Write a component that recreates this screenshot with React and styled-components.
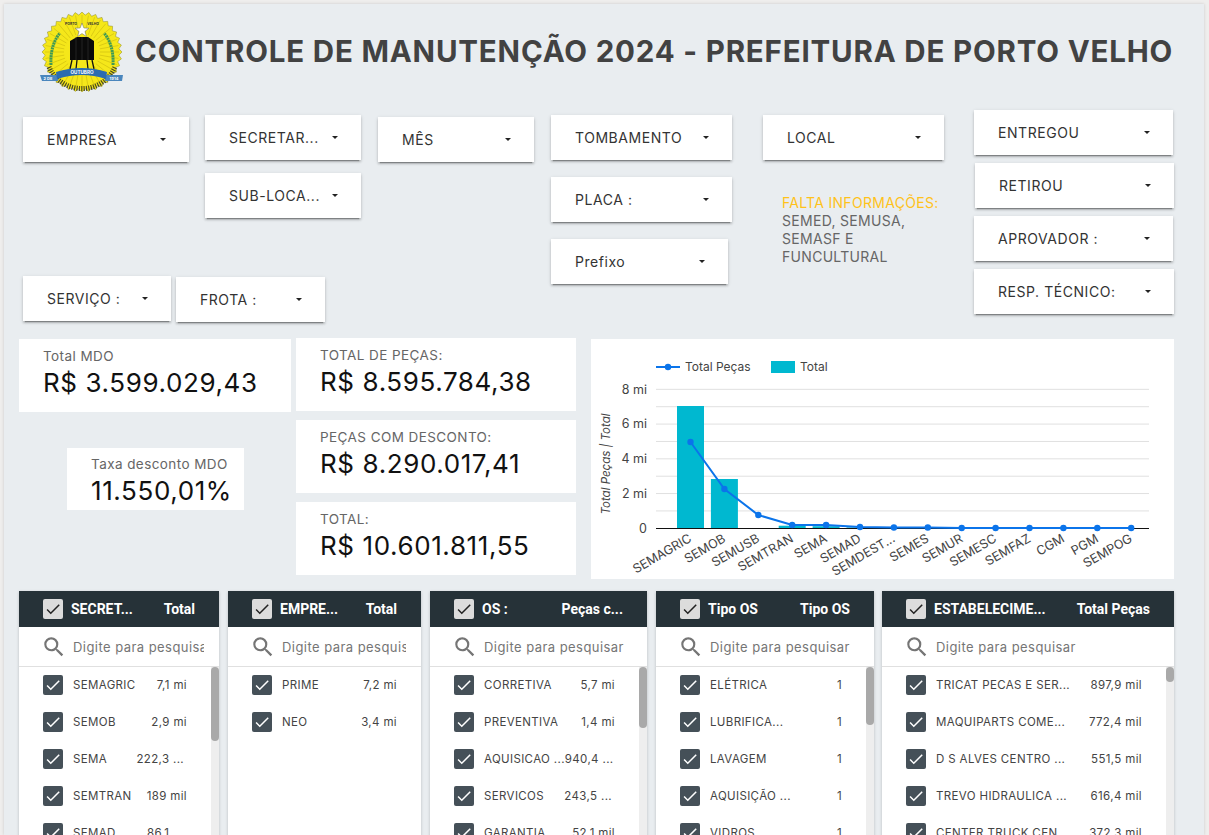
import styled, { createGlobalStyle } from "styled-components";

const GlobalStyle = createGlobalStyle`
  html, body {
    margin: 0;
    height: 100%;
    overflow: hidden;
    background: #efeeed;
    font-family: "Inter", "Liberation Sans", sans-serif;
  }
  * {
    box-sizing: border-box;
  }
`;

const Canvas = styled.div`
  margin: 4px 0 0 4px;
  width: 1200px;
  height: 831px;
  overflow: hidden;
  background: #e9edf0;
  box-shadow: 0 0 3px rgba(0, 0, 0, 0.15);
`;

const Header = styled.header`
  display: flex;
  align-items: center;
  height: 106px;
  padding-left: 36px;
`;

const LogoSvg = styled.svg`
  flex: none;
  align-self: flex-start;
  margin-top: 8px;
`;

const Title = styled.h1`
  margin: 0 0 12px 11px;
  font-size: 29.5px;
  font-weight: 700;
  letter-spacing: 0.82px;
  white-space: nowrap;
  color: #424242;
`;

const FilterArea = styled.section`
  display: flex;
  padding-left: 19px;
`;

const LeftFilters = styled.div`
  display: flex;
  flex-direction: column;
  width: 511px;
`;

const Row = styled.div`
  display: flex;
  gap: ${(p) => p.$gap || 0}px;
  margin-top: ${(p) => p.$mt || 0}px;
`;

const Column = styled.div`
  display: flex;
  flex-direction: column;
  gap: ${(p) => p.$gap || 0}px;
  margin-left: ${(p) => p.$ml || 0}px;
  padding-top: ${(p) => p.$pt || 0}px;
`;

const FilterBox = styled.div`
  display: flex;
  align-items: center;
  justify-content: space-between;
  flex: none;
  width: ${(p) => p.$w}px;
  height: 45px;
  margin-left: ${(p) => p.$ml || 0}px;
  margin-top: ${(p) => p.$mt || 0}px;
  padding: 0 23px 0 24px;
  background: #fff;
  font-size: 14px;
  letter-spacing: 0.55px;
  white-space: nowrap;
  color: #333;
  box-shadow: 0 3px 1px -2px rgba(0, 0, 0, 0.3), 0 2px 2px 0 rgba(0, 0, 0, 0.16),
    0 1px 4px 0 rgba(0, 0, 0, 0.12);
`;

const Caret = styled.span`
  width: 0;
  height: 0;
  border-left: 3px solid transparent;
  border-right: 3px solid transparent;
  border-top: 3.5px solid #222;
`;

const Note = styled.div`
  margin-top: 34px;
  padding-left: 19px;
  width: 181px;
  font-size: 14px;
  line-height: 18px;
  letter-spacing: 0.3px;
  color: #666;
`;

const NoteTitle = styled.div`
  white-space: nowrap;
  color: #ffc21a;
`;

const KpiArea = styled.section`
  display: flex;
  margin-top: 16px;
  padding-left: 15px;
`;

const KpiCard = styled.div`
  display: flex;
  flex-direction: column;
  width: ${(p) => p.$w}px;
  height: ${(p) => p.$h || 73}px;
  margin-left: ${(p) => p.$ml || 0}px;
  margin-top: ${(p) => p.$mt || 0}px;
  padding: ${(p) => p.$pt || 9}px 0 0 24px;
  background: #fff;
`;

const KpiLabel = styled.div`
  font-size: 13.5px;
  line-height: 16px;
  letter-spacing: 0.42px;
  white-space: nowrap;
  color: #666;
`;

const KpiValue = styled.div`
  margin-top: 3px;
  font-size: 26px;
  line-height: 32px;
  letter-spacing: 0.6px;
  white-space: nowrap;
  color: #111;
`;

const ChartCard = styled.div`
  width: 583px;
  height: 240px;
  margin: 1px 0 0 15px;
  background: #fff;
`;

const ChartSvg = styled.svg`
  display: block;
`;

const ChartText = styled.text`
  font-size: ${(p) => p.$size || 12}px;
  font-style: ${(p) => (p.$italic ? "italic" : "normal")};
  fill: #444;
`;

const TableArea = styled.section`
  display: flex;
  gap: 9px;
  margin-top: 12px;
  padding-left: 15px;
`;

const Table = styled.div`
  flex: none;
  width: ${(p) => p.$w}px;
  height: 260px;
  margin-left: ${(p) => p.$ml || 0}px;
  background: #fff;
  box-shadow: 0 1px 3px rgba(0, 0, 0, 0.2);
`;

const TableHead = styled.div`
  display: flex;
  align-items: center;
  height: 36px;
  padding: 0 24px;
  background: #263238;
  font-family: "Roboto", "Liberation Sans", sans-serif;
  font-size: 14px;
  font-weight: 700;
  white-space: nowrap;
  color: #fff;
`;

const HeadLabel = styled.span`
  margin-left: 8px;
`;

const HeadValue = styled.span`
  margin-left: auto;
`;

const CheckBox = styled.span`
  display: inline-flex;
  align-items: center;
  justify-content: center;
  flex: none;
  width: 20px;
  height: 20px;
  border-radius: 2px;
  background: ${(p) => (p.$light ? "#dcdcdc" : "#455058")};
  color: ${(p) => (p.$light ? "#222" : "#fff")};
`;

const SearchRow = styled.div`
  display: flex;
  align-items: center;
  gap: 6px;
  height: 40px;
  padding: 0 15px 0 22px;
  border-bottom: 1px solid #e0e0e0;
`;

const SearchIcon = styled.svg`
  flex: none;
  width: 26px;
  height: 26px;
  fill: #757575;
`;

const SearchText = styled.span`
  overflow: hidden;
  font-size: 13px;
  letter-spacing: 0.45px;
  white-space: nowrap;
  color: #757575;
`;

const ListBody = styled.div`
  position: relative;
`;

const ListRow = styled.div`
  display: flex;
  align-items: center;
  height: 37px;
  padding: 0 ${(p) => (p.$scroll ? 32 : 24)}px 1px 24px;
  font-size: 11.5px;
  letter-spacing: 0.36px;
  white-space: nowrap;
  color: #444;
`;

const RowLabel = styled.span`
  margin-left: 10px;
`;

const RowValue = styled.span`
  margin-left: auto;
  margin-right: ${(p) => (p.$cut ? 3 : 0)}px;
`;

const ScrollTrack = styled.div`
  position: absolute;
  top: 0;
  right: 0;
  width: 8px;
  height: 100%;
  background: #eeeeee;
`;

const ScrollThumb = styled.div`
  height: ${(p) => p.$h}px;
  border-radius: 4px;
  background: #a9a9a9;
`;

const rightFilters = [
  { label: "ENTREGOU", w: 199 },
  { label: "RETIROU", w: 199, ml: 1 },
  { label: "APROVADOR :", w: 199 },
  { label: "RESP. TÉCNICO:", w: 200 },
];

const tables = [
  {
    w: 200,
    head: "SECRET...",
    value: "Total",
    thumb: 74,
    rows: [
      ["SEMAGRIC", "7,1 mi"],
      ["SEMOB", "2,9 mi"],
      ["SEMA", "222,3 ..."],
      ["SEMTRAN", "189 mil"],
      ["SEMAD", "86,1 ..."],
    ],
  },
  {
    w: 193,
    head: "EMPRE...",
    value: "Total",
    rows: [
      ["PRIME", "7,2 mi"],
      ["NEO", "3,4 mi"],
    ],
  },
  {
    w: 217,
    head: "OS :",
    value: "Peças c...",
    thumb: 61,
    rows: [
      ["CORRETIVA", "5,7 mi"],
      ["PREVENTIVA", "1,4 mi"],
      ["AQUISICAO ...", "940,4 ..."],
      ["SERVICOS", "243,5 ..."],
      ["GARANTIA", "52,1 mil"],
    ],
  },
  {
    w: 218,
    head: "Tipo OS",
    value: "Tipo OS",
    thumb: 58,
    rows: [
      ["ELÉTRICA", "1"],
      ["LUBRIFICA...", "1"],
      ["LAVAGEM", "1"],
      ["AQUISIÇÃO ...", "1"],
      ["VIDROS", "1"],
    ],
  },
  {
    w: 292,
    ml: -1,
    head: "ESTABELECIME...",
    value: "Total Peças",
    thumb: 15,
    rows: [
      ["TRICAT PECAS E SER...", "897,9 mil"],
      ["MAQUIPARTS COME...", "772,4 mil"],
      ["D S ALVES CENTRO ...", "551,5 mil"],
      ["TREVO HIDRAULICA ...", "616,4 mil"],
      ["CENTER TRUCK CEN...", "372,3 mil"],
    ],
  },
];

const chartLabels = [
  "SEMAGRIC",
  "SEMOB",
  "SEMUSB",
  "SEMTRAN",
  "SEMA",
  "SEMAD",
  "SEMDEST...",
  "SEMES",
  "SEMUR",
  "SEMESC",
  "SEMFAZ",
  "CGM",
  "PGM",
  "SEMPOG",
];
const linePoints = [442, 489, 515, 525, 525, 527, 527.5, 527.5, 528, 528, 528, 528, 528, 528];
const bars = [406, 479, 528, 525.7, 526.2, 527.4, 527.6, 527.8, 527.8, 528, 528, 528, 528, 528];
const tickX = (i) => 690.5 + i * 33.9;

const sunPoints = Array.from({ length: 72 }, (_, i) => {
  const r = i % 2 ? 37 : 40;
  const a = (i / 72) * Math.PI * 2;
  return `${(82 + r * Math.cos(a)).toFixed(1)},${(52 + r * Math.sin(a)).toFixed(1)}`;
}).join(" ");

const sunRays = Array.from({ length: 36 }, (_, i) => {
  const a = (i / 36) * Math.PI * 2;
  return `M${82 + 18 * Math.cos(a)} ${52 + 18 * Math.sin(a)}L${82 + 37 * Math.cos(a)} ${52 + 37 * Math.sin(a)}`;
}).join("");

const Logo = () => (
  <LogoSvg width="84" height="82" viewBox="40 12 84 82">
    <polygon points={sunPoints} fill="#f5e71a" stroke="#8d8a2a" strokeWidth="0.5" />
    <path d={sunRays} stroke="#c9b90f" strokeWidth="0.6" />
    <path d="M51 65 Q50 45 60 33" fill="none" stroke="#3f9a55" strokeWidth="3" strokeDasharray="2 0.6" />
    <path d="M113 65 Q114 45 104 33" fill="none" stroke="#3f9a55" strokeWidth="3" strokeDasharray="2 0.6" />
    <path
      d="M49 67 A36 36 0 0 0 115 67"
      fill="none"
      stroke="#4a4a20"
      strokeWidth="5"
      strokeDasharray="1.2 1.2"
    />
    <polygon
      points="82,23 83.9,28 89,28.2 85,31.4 86.4,36.4 82,33.6 77.6,36.4 79,31.4 75,28.2 80.1,28"
      fill="#fff"
      stroke="#666"
      strokeWidth="0.5"
    />
    <path d="M70 41 L77 37 L88 37 L94 41 L94 60 L70 60 Z" fill="#0a0a0a" />
    <path d="M76 37V60M82 37V60M88 37V60" stroke="#333" strokeWidth="0.6" />
    <path d="M72 60L70 69M77 60L76 69M87 60L88 69M92 60L94 69" stroke="#111" strokeWidth="1.3" />
    <polygon points="40,75 58,75 58,81 42,81" fill="#4a86bd" />
    <polygon points="105,75 123,75 122,81 105,81" fill="#4a86bd" />
    <path d="M56 72 Q82 64 107 72 L106 79 Q82 71 57 79 Z" fill="#2b6cb0" />
    <text x="82" y="74" textAnchor="middle" fontSize="4.6" fontWeight="700" fill="#fff">
      OUTUBRO
    </text>
    <text x="48" y="80" textAnchor="middle" fontSize="4" fontWeight="700" fill="#fff">
      2 DE
    </text>
    <text x="114" y="80" textAnchor="middle" fontSize="4" fontWeight="700" fill="#fff">
      1914
    </text>
    <text x="71" y="25" textAnchor="middle" fontSize="3.4" fontWeight="700" fill="#333">
      PORTO
    </text>
    <text x="93" y="25" textAnchor="middle" fontSize="3.4" fontWeight="700" fill="#333">
      VELHO
    </text>
  </LogoSvg>
);

const Check = () => (
  <svg width="18" height="18" viewBox="0 0 24 24" fill="currentColor">
    <path d="M9 16.17L4.83 12l-1.42 1.41L9 19 21 7l-1.41-1.41z" />
  </svg>
);

const Filter = ({ label, ...rest }) => (
  <FilterBox {...rest}>
    {label}
    <Caret />
  </FilterBox>
);

const Kpi = ({ label, value, ...rest }) => (
  <KpiCard {...rest}>
    <KpiLabel>{label}</KpiLabel>
    <KpiValue>{value}</KpiValue>
  </KpiCard>
);

const Chart = () => (
  <ChartSvg width="583" height="240" viewBox="591 339 583 240">
    <line x1="656" x2="680" y1="367" y2="367" stroke="#0b74ea" strokeWidth="2" />
    <circle cx="668" cy="367" r="3.2" fill="#0b74ea" />
    <ChartText x="685" y="371">Total Peças</ChartText>
    <rect x="771" y="361" width="24" height="12" fill="#00b8d0" />
    <ChartText x="800" y="371">Total</ChartText>

    {[1, 2, 3, 4, 5, 6, 7, 8].map((n) => (
      <line
        key={n}
        x1="656"
        x2="1149"
        y1={528.3 - n * 17.37}
        y2={528.3 - n * 17.37}
        stroke="#e0e0e0"
      />
    ))}
    {["0", "2 mi", "4 mi", "6 mi", "8 mi"].map((t, i) => (
      <ChartText key={t} x="647" y={532.5 - i * 34.75} textAnchor="end" $size={12.5}>
        {t}
      </ChartText>
    ))}
    <ChartText
      x="0"
      y="0"
      transform="translate(610 464) rotate(-90)"
      textAnchor="middle"
      $size={11.5}
      $italic
    >
      Total Peças | Total
    </ChartText>

    {bars.map((top, i) =>
      top < 528 ? (
        <rect key={i} x={tickX(i) - 13.5} y={top} width="27" height={528.3 - top} fill="#00b8d0" />
      ) : null
    )}
    <line x1="656" x2="1149" y1="528.5" y2="528.5" stroke="#111" />
    <polyline
      points={linePoints.map((y, i) => `${tickX(i)},${y}`).join(" ")}
      fill="none"
      stroke="#0b74ea"
      strokeWidth="2"
    />
    {linePoints.map((y, i) => (
      <circle key={i} cx={tickX(i)} cy={y} r="3.2" fill="#0b74ea" />
    ))}
    {chartLabels.map((t, i) => (
      <ChartText
        key={t}
        x="0"
        y="0"
        transform={`translate(${tickX(i) + 2} 541) rotate(-30)`}
        textAnchor="end"
        $size={12.6}
      >
        {t}
      </ChartText>
    ))}
  </ChartSvg>
);

const ListTable = ({ w, ml, head, value, thumb, rows }) => (
  <Table $w={w} $ml={ml}>
    <TableHead>
      <CheckBox $light>
        <Check />
      </CheckBox>
      <HeadLabel>{head}</HeadLabel>
      <HeadValue>{value}</HeadValue>
    </TableHead>
    <SearchRow>
      <SearchIcon viewBox="0 0 24 24">
        <path d="M15.5 14h-.79l-.28-.27A6.471 6.471 0 0 0 16 9.5 6.5 6.5 0 1 0 9.5 16c1.61 0 3.09-.59 4.23-1.57l.27.28v.79l5 4.99L20.49 19l-4.99-5zm-6 0C7.01 14 5 11.99 5 9.5S7.01 5 9.5 5 14 7.01 14 9.5 11.99 14 9.5 14z" />
      </SearchIcon>
      <SearchText>Digite para pesquisar</SearchText>
    </SearchRow>
    <ListBody>
      {rows.map(([label, val]) => (
        <ListRow key={label} $scroll={!!thumb}>
          <CheckBox>
            <Check />
          </CheckBox>
          <RowLabel>{label}</RowLabel>
          <RowValue $cut={val.endsWith("...")}>{val}</RowValue>
        </ListRow>
      ))}
      {thumb && (
        <ScrollTrack>
          <ScrollThumb $h={thumb} />
        </ScrollTrack>
      )}
    </ListBody>
  </Table>
);

export default function App() {
  return (
    <>
      <GlobalStyle />
      <Canvas>
        <Header>
          <Logo />
          <Title>CONTROLE DE MANUTENÇÃO 2024 - PREFEITURA DE PORTO VELHO</Title>
        </Header>

        <FilterArea>
          <LeftFilters>
            <Row $gap={16}>
              <Filter label="EMPRESA" $w={166} $mt={7} />
              <Column $pt={5} $gap={13}>
                <Filter label="SECRETAR..." $w={156} />
                <Filter label="SUB-LOCA..." $w={156} />
              </Column>
              <Filter label="MÊS" $w={156} $mt={7} $ml={1} />
            </Row>
            <Row $gap={5} $mt={58}>
              <Filter label="SERVIÇO :" $w={148} />
              <Filter label="FROTA :" $w={149} $mt={1} />
            </Row>
          </LeftFilters>
          <Column $ml={17} $pt={5} $gap={17}>
            <Filter label="TOMBAMENTO" $w={181} />
            <Filter label="PLACA :" $w={181} />
            <Filter label="Prefixo" $w={177} />
          </Column>
          <Column $ml={31} $pt={5}>
            <Filter label="LOCAL" $w={181} />
            <Note>
              <NoteTitle>FALTA INFORMAÇÕES:</NoteTitle>
              SEMED, SEMUSA, SEMASF E FUNCULTURAL
            </Note>
          </Column>
          <Column $ml={30} $gap={8}>
            {rightFilters.map((f) => (
              <Filter key={f.label} label={f.label} $w={f.w} $ml={f.ml} />
            ))}
          </Column>
        </FilterArea>

        <KpiArea>
          <Column>
            <Kpi label="Total MDO" value="R$ 3.599.029,43" $w={272} $mt={1} />
            <Kpi
              label="Taxa desconto MDO"
              value="11.550,01%"
              $w={177}
              $h={62}
              $ml={48}
              $mt={36}
              $pt={8}
            />
          </Column>
          <Column $ml={5} $gap={9}>
            <Kpi label="TOTAL DE PEÇAS:" value="R$ 8.595.784,38" $w={280} />
            <Kpi label="PEÇAS COM DESCONTO:" value="R$ 8.290.017,41" $w={280} />
            <Kpi label="TOTAL:" value="R$ 10.601.811,55" $w={280} />
          </Column>
          <ChartCard>
            <Chart />
          </ChartCard>
        </KpiArea>

        <TableArea>
          {tables.map((t) => (
            <ListTable key={t.head} {...t} />
          ))}
        </TableArea>
      </Canvas>
    </>
  );
}
